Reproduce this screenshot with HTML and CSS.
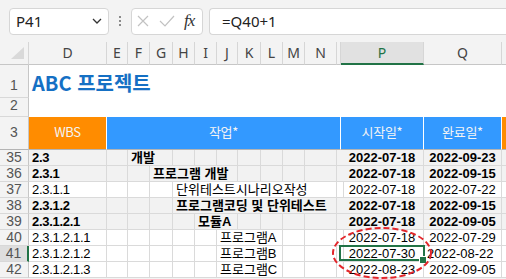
FILE: index.html
```html
<!DOCTYPE html>
<html lang="ko">
<head>
    <meta charset="UTF-8">
    <title>ABC 프로젝트</title>
    <link rel="stylesheet" href="styles.css">
</head>
<body>
<div class="toolbar">
    <div class="name-box">
        <span>P41</span>
        <svg class="chevron" width="10" height="6" viewBox="0 0 10 6"><path d="M1 1 L5 5 L9 1"/></svg>
    </div>
    <div class="grip"><i></i><i></i><i></i></div>
    <div class="fx-box">
        <svg class="cancel" width="12" height="12" viewBox="0 0 12 12"><path d="M1 1 L11 11 M11 1 L1 11"/></svg>
        <svg class="enter" width="16" height="12" viewBox="0 0 16 12"><path d="M1 6 L6 11 L15 1"/></svg>
        <span class="fx">fx</span>
    </div>
    <div class="formula">=Q40+1</div>
</div>

<div class="sheet">
    <!-- column letters -->
    <div class="row head">
        <div class="corner"></div>
        <div>D</div><div>E</div><div>F</div><div>G</div><div>H</div><div>I</div><div>J</div>
        <div>K</div><div>L</div><div>M</div><div>N</div><div></div>
        <div class="active">P</div><div>Q</div><div></div>
    </div>

    <div class="row top">
        <div class="num n1">1</div>
        <div class="title">ABC 프로젝트</div>
    </div>
    <div class="row top">
        <div class="num n2">2</div>
        <div class="blank"></div>
    </div>
    <div class="row labels">
        <div class="num n3">3</div>
        <div class="orange">WBS</div>
        <div class="blue task-h">작업*</div>
        <div class="blue">시작일*</div>
        <div class="blue">완료일*</div>
        <div class="orange"></div>
    </div>

    <div class="row item sum">
        <div class="num">35</div>
        <div class="wbs">2.3</div><div></div>
        <div class="name s2">개발</div>
        <div></div><div></div><div></div><div></div><div></div><div></div><div></div><div></div>
        <div class="date">2022-07-18</div><div class="date">2022-09-23</div><div></div>
    </div>
    <div class="row item sum">
        <div class="num">36</div>
        <div class="wbs">2.3.1</div><div></div><div></div>
        <div class="name s4">프로그램 개발</div>
        <div></div><div></div><div></div><div></div><div></div>
        <div class="date">2022-07-18</div><div class="date">2022-09-15</div><div></div>
    </div>
    <div class="row item">
        <div class="num">37</div>
        <div class="wbs">2.3.1.1</div><div></div><div></div><div></div>
        <div class="name s7">단위테스트시나리오작성</div>
        <div></div>
        <div class="date">2022-07-18</div><div class="date">2022-07-22</div><div></div>
    </div>
    <div class="row item sum">
        <div class="num">38</div>
        <div class="wbs">2.3.1.2</div><div></div><div></div><div></div>
        <div class="name s7">프로그램코딩 및 단위테스트</div>
        <div></div>
        <div class="date">2022-07-18</div><div class="date">2022-09-15</div><div></div>
    </div>
    <div class="row item sum">
        <div class="num">39</div>
        <div class="wbs">2.3.1.2.1</div><div></div><div></div><div></div><div></div>
        <div class="name s2">모듈A</div>
        <div></div><div></div><div></div><div></div><div></div>
        <div class="date">2022-07-18</div><div class="date">2022-09-05</div><div></div>
    </div>
    <div class="row item">
        <div class="num">40</div>
        <div class="wbs">2.3.1.2.1.1</div><div></div><div></div><div></div><div></div><div></div>
        <div class="name s3">프로그램A</div>
        <div></div><div></div><div></div>
        <div class="date">2022-07-18</div><div class="date">2022-07-29</div><div></div>
    </div>
    <div class="row item">
        <div class="num on">41</div>
        <div class="wbs">2.3.1.2.1.2</div><div></div><div></div><div></div><div></div><div></div>
        <div class="name s3">프로그램B</div>
        <div></div><div></div><div></div>
        <div class="date sel">2022-07-30</div><div class="date left">2022-08-22</div><div></div>
    </div>
    <div class="row item">
        <div class="num">42</div>
        <div class="wbs">2.3.1.2.1.3</div><div></div><div></div><div></div><div></div><div></div>
        <div class="name s3">프로그램C</div>
        <div></div><div></div><div></div>
        <div class="date">2022-08-23</div><div class="date">2022-09-05</div><div></div>
    </div>

    <svg class="mark" width="104" height="54" viewBox="0 0 104 54">
        <ellipse cx="52" cy="27" rx="49" ry="25"/>
    </svg>
</div>
</body>
</html>
```

FILE: styles.css
```css
* {
    box-sizing: border-box;
}

body {
    margin: 0;
    width: 506px;
    height: 279px;
    overflow: hidden;
    background: #f3f3f3;
    font-family: "Noto Sans", "Noto Sans CJK KR", sans-serif;
}

/* formula bar */
.toolbar {
    display: flex;
    align-items: center;
    height: 42px;
    padding-left: 9px;
}

.name-box,
.fx-box,
.formula {
    height: 27px;
    background: #fff;
    border: 1px solid #d6d6d6;
    border-radius: 4px;
    font-size: 15px;
    color: #222;
}

.name-box {
    display: flex;
    align-items: center;
    justify-content: space-between;
    width: 100px;
    padding: 0 6px 0 6px;
}

.chevron path {
    fill: none;
    stroke: #333;
    stroke-width: 1.3;
}

.grip {
    display: flex;
    flex-direction: column;
    align-items: center;
    gap: 2px;
    width: 4px;
    margin: 0 9px;
}

.grip i {
    width: 2px;
    height: 2px;
    background: #8a8a8a;
}

.fx-box {
    display: flex;
    align-items: center;
    width: 72px;
    padding-left: 5px;
}

.fx-box svg path {
    fill: none;
    stroke: #c2c2c2;
    stroke-width: 1.2;
}

.cancel {
    margin-right: 10px;
}

.enter {
    margin-right: 9px;
}

.fx {
    font-family: "Liberation Serif", serif;
    font-style: italic;
    font-size: 17px;
    color: #333;
    letter-spacing: -1px;
}

.formula {
    flex: 1;
    margin-left: 6px;
    padding-left: 12px;
    line-height: 25px;
    border-right: none;
    border-radius: 4px 0 0 4px;
}

/* grid */
.sheet {
    position: relative;
    display: grid;
    grid-template-columns: 29px 78px 21px 22px 23px 22px 22px 21px 23px 22px 22px 32px 4px 83px 78px 1fr;
    grid-template-rows: 23px 33px 19px 33px;
    grid-auto-rows: 16px;
    background: #fff;
}

.row {
    display: contents;
}

.head > div {
    background: #f3f3f3;
    border-right: 1px solid #d6d6d6;
    border-bottom: 1px solid #c6c6c6;
    text-align: center;
    font-size: 14px;
    line-height: 22px;
    color: #444;
}

.head .corner {
    position: relative;
}

.head .corner::after {
    content: "";
    position: absolute;
    right: 4px;
    bottom: 5px;
    border-left: 13px solid transparent;
    border-bottom: 12px solid #d9d9d9;
}

.head .active {
    background: #e1e1e1;
    color: #217346;
    border-bottom: 2px solid #217346;
}

.num {
    background: #f3f3f3;
    border-right: 1px solid #c6c6c6;
    border-bottom: 1px solid #d8d8d8;
    text-align: center;
    font-family: "Liberation Sans", sans-serif;
    font-size: 14px;
    line-height: 15px;
    color: #555;
}

.num.on {
    background: #dedede;
    border-right: 2px solid #217346;
}

.n1 {
    padding-top: 13px;
}

.n2 {
    padding-top: 0;
}

.n3 {
    padding-top: 8px;
    border-bottom-color: #b4b4b4;
}

.title {
    grid-column: span 15;
    padding: 3px 0 0 3px;
    font-family: "Noto Sans CJK KR", sans-serif;
    font-size: 20px;
    font-weight: bold;
    color: #1570c4;
}

.blank {
    grid-column: span 15;
}

.labels > div:not(.num) {
    border-right: 1px solid #fff;
    border-bottom: 1px solid #b4b4b4;
    text-align: center;
    font-family: "Noto Sans CJK KR", sans-serif;
    font-size: 13px;
    line-height: 30px;
    color: #f4f4f4;
    letter-spacing: -0.3px;
}

.orange {
    background: #ff8c00;
}

.blue {
    background: #3399ff;
}

.task-h {
    grid-column: span 11;
}

.item > div:not(.num) {
    border-right: 1px solid #dadada;
    border-bottom: 1px solid #dadada;
    padding: 0 3px;
    font-family: "Liberation Sans", "Noto Sans CJK KR", sans-serif;
    font-size: 13px;
    line-height: 16px;
    white-space: nowrap;
    color: #000;
}

.sum > div:not(.num) {
    background: #f2f2f2;
    font-weight: bold;
}

.item .wbs {
    letter-spacing: -0.3px;
}

.item .name {
    font-size: 14px;
}

.item .date {
    text-align: center;
}

.item .left {
    text-align: left;
    padding-left: 2px;
}

.s2 {
    grid-column: span 2;
}

.s3 {
    grid-column: span 3;
}

.s4 {
    grid-column: span 4;
}

.s7 {
    grid-column: span 7;
}

/* active cell */
.item .sel {
    position: relative;
}

.sel::before {
    content: "";
    position: absolute;
    top: -1px;
    left: -2px;
    right: -2px;
    bottom: 0;
    border: 2px solid #217346;
}

.sel::after {
    content: "";
    position: absolute;
    right: -4px;
    bottom: -3px;
    width: 6px;
    height: 6px;
    background: #217346;
    border: 1px solid #fff;
}

.mark {
    position: absolute;
    left: 330px;
    top: 184px;
}

.mark ellipse {
    fill: none;
    stroke: #e3262b;
    stroke-width: 2;
    stroke-dasharray: 6 3;
}
```
